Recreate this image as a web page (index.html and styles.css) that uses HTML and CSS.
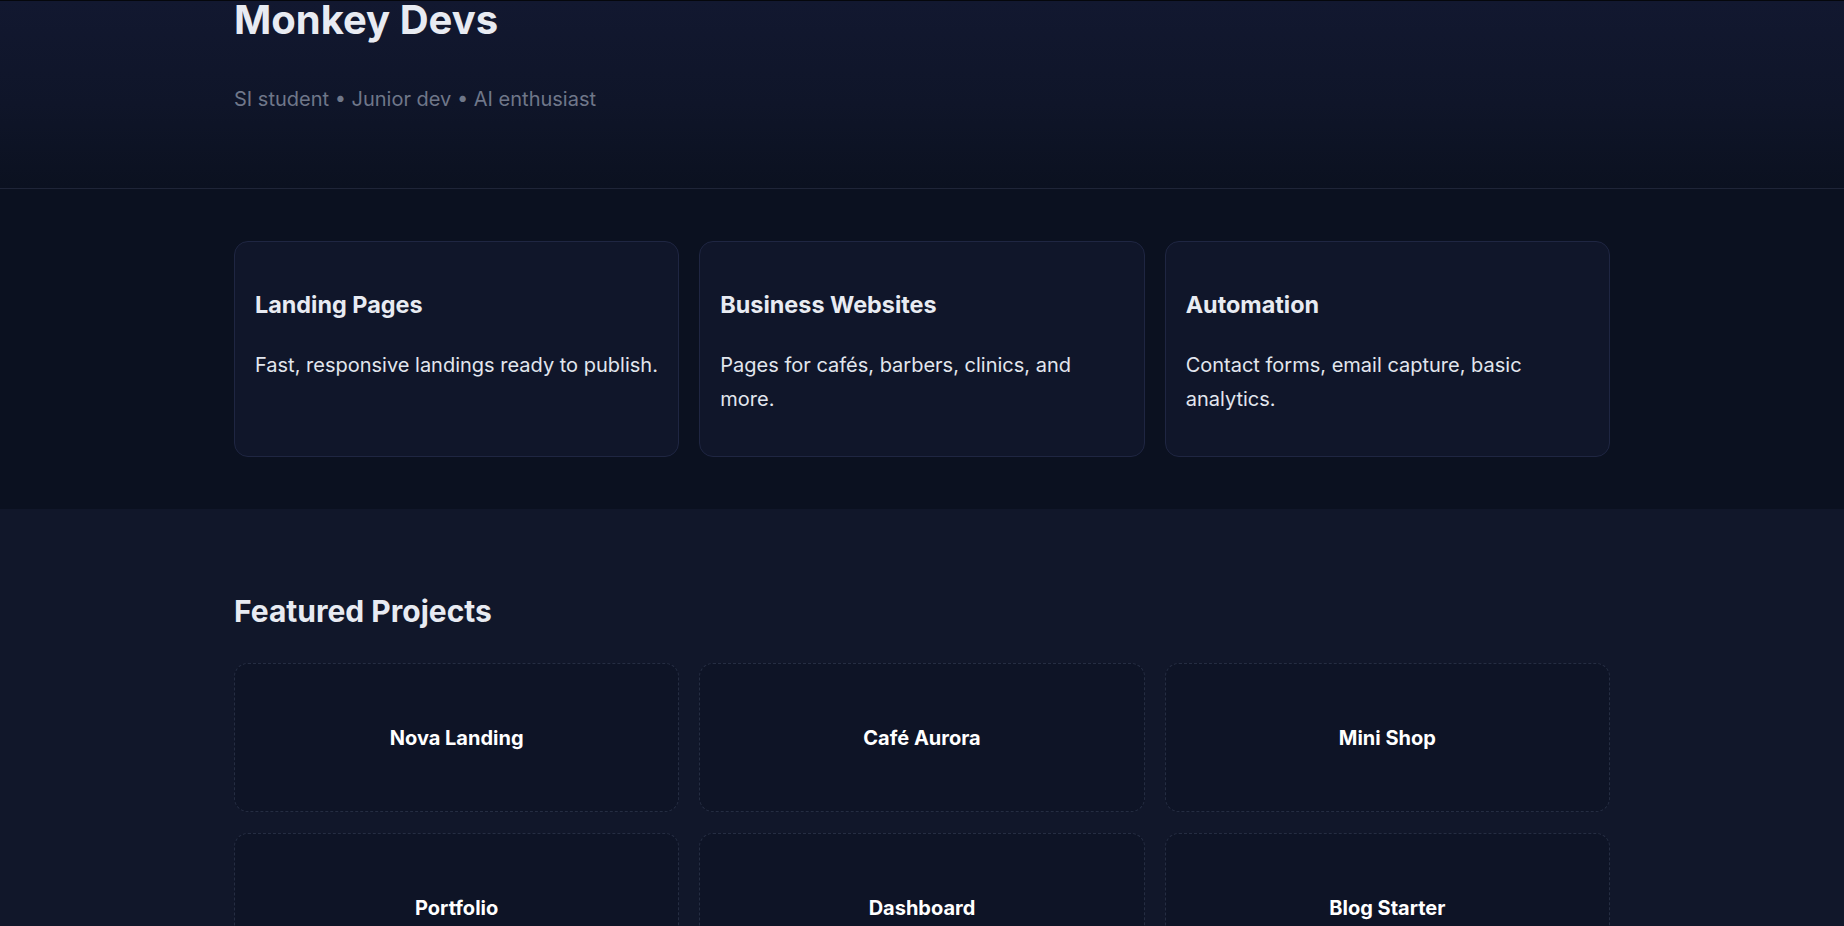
FILE: index.html
```html
<!DOCTYPE html>
<html lang="en">
<head>
<meta charset="utf-8">
<title>Monkey Devs</title>
<link rel="stylesheet" href="styles.css">
</head>
<body>
<header class="hero">
  <div class="container">
    <h1 class="hero-title">Monkey Devs</h1>
    <p class="hero-sub">SI student • Junior dev • AI enthusiast</p>
  </div>
</header>
<section class="services">
  <div class="container grid">
    <article class="service-card">
      <h3 class="service-title">Landing Pages</h3>
      <p class="service-desc">Fast, responsive landings ready to publish.</p>
    </article>
    <article class="service-card">
      <h3 class="service-title">Business Websites</h3>
      <p class="service-desc">Pages for cafés, barbers, clinics, and more.</p>
    </article>
    <article class="service-card">
      <h3 class="service-title">Automation</h3>
      <p class="service-desc">Contact forms, email capture, basic analytics.</p>
    </article>
  </div>
</section>
<section class="projects">
  <div class="container">
    <h2 class="section-title">Featured Projects</h2>
    <div class="grid project-grid">
      <div class="project-card">Nova Landing</div>
      <div class="project-card">Café Aurora</div>
      <div class="project-card">Mini Shop</div>
      <div class="project-card">Portfolio</div>
      <div class="project-card">Dashboard</div>
      <div class="project-card">Blog Starter</div>
    </div>
  </div>
</section>
</body>
</html>
```
FILE: styles.css
```css
* { box-sizing: border-box; }
html, body { margin: 0; padding: 0; }
body {
  font-family: Inter, "Noto Sans", "Liberation Sans", sans-serif;
  background: #0f1629;
  color: #e5e7eb;
  overflow: hidden;
}
.container {
  width: 1376px;
  margin: 0 auto;
}
.hero {
  border-top: 1px solid #05070c;
  border-bottom: 1px solid #1f2538;
  background: linear-gradient(180deg, #121830 0%, #0f1529 55%, #0b1120 100%);
  padding-bottom: 75px;
}
.hero-title {
  margin: 0;
  font-size: 40px;
  line-height: 38px;
  font-weight: 700;
  color: #e8ebf2;
}
.hero-sub {
  margin: 46px 0 0;
  font-size: 20px;
  line-height: 28px;
  color: #6f7789;
}
.services {
  background: #0b1120;
  padding: 52px 0;
}
.grid {
  display: grid;
  grid-template-columns: repeat(3, 1fr);
  gap: 20px;
}
.project-grid {
  row-gap: 21px;
}
.service-card {
  background: #10162a;
  border: 1px solid #1f2642;
  border-radius: 14px;
  padding: 0 20px;
}
.service-title {
  margin: 49px 0 0;
  font-size: 23.4px;
  font-weight: 700;
  line-height: 28px;
  color: #e8ebf2;
}
.service-desc {
  margin: 29px 0 40px;
  font-size: 20px;
  line-height: 34px;
  color: #e2e6ee;
}
.projects {
  background: #11172a;
  padding: 84px 0 60px;
}
.section-title {
  margin: 0 0 34px;
  font-size: 30px;
  font-weight: 700;
  line-height: normal;
  color: #e8ebf2;
}
.project-card {
  height: 149px;
  display: flex;
  align-items: center;
  justify-content: center;
  background: #0e1426;
  border: 1px dashed #252d42;
  border-radius: 14px;
  font-size: 20px;
  font-weight: 700;
  color: #ffffff;
}
```
